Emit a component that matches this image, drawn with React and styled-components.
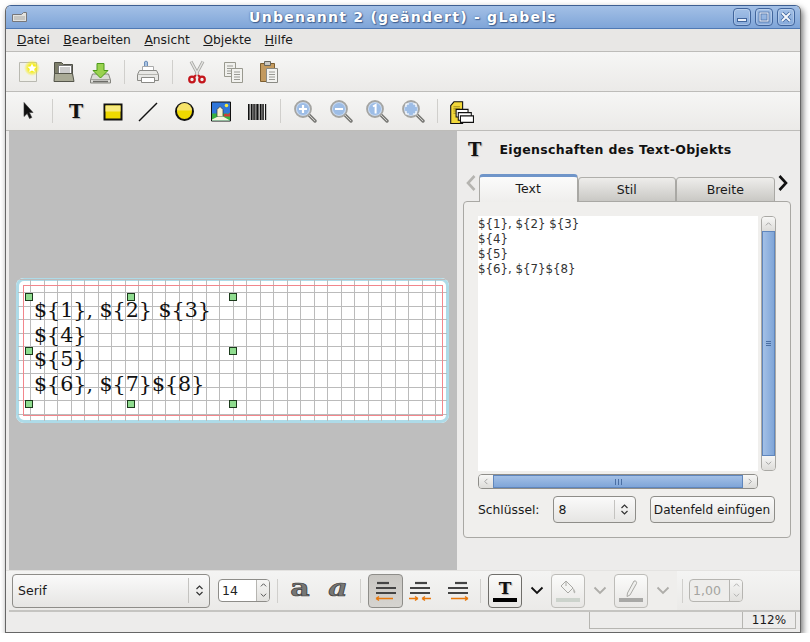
import React from "react";
import styled, { createGlobalStyle } from "styled-components";

const GlobalStyle = createGlobalStyle`
  html, body { margin: 0; padding: 0; background: #fff; }
  body { font-family: "DejaVu Sans", sans-serif; font-size: 12px; color: #1a1a1a; }
`;

const Window = styled.div`
  box-sizing: border-box;
  width: 796px;
  height: 628px;
  margin: 5px 0 0 5px;
  display: flex;
  flex-direction: column;
  background: #edeceb;
  border: 1px solid #666;
  border-top-color: #3d5f92;
  border-radius: 6px 6px 0 0;
  box-shadow: 2px 3px 6px rgba(0, 0, 0, 0.55);
  overflow: hidden;
`;

const TitleBar = styled.div`
  position: relative;
  height: 22px;
  flex: none;
  display: flex;
  align-items: center;
  justify-content: center;
  background: linear-gradient(#a3c0e6, #7fa5d8);
  border-bottom: 1px solid #4f79b4;
`;

const TitleText = styled.div`
  font-size: 14px;
  font-weight: bold;
  color: #fff;
  letter-spacing: 1.25px;
  margin-top: -1px;
  text-shadow: 0 0 2px #3f5f90, 1px 1px 1px #3f5f90;
`;

const WindowIcon = styled.div`
  position: absolute;
  left: 6px;
  top: 6px;
  display: flex;
`;

const WindowButtons = styled.div`
  position: absolute;
  right: 5px;
  top: 2px;
  display: flex;
  gap: 4px;
`;

const WindowButton = styled.div`
  box-sizing: border-box;
  width: 18px;
  height: 18px;
  border: 1px solid #41659c;
  border-radius: 4px;
  display: flex;
  align-items: center;
  justify-content: center;
  background: linear-gradient(#a3c0e6, #86aadb);
  box-shadow: inset 0 0 0 1px rgba(255, 255, 255, 0.25);
`;

const MenuBar = styled.div`
  height: 22px;
  flex: none;
  display: flex;
  align-items: center;
  padding-left: 11px;
  gap: 13.5px;
  background: #e8e7e5;
  border-bottom: 1px solid #bdbcb9;
  font-size: 12.3px;
`;

const Mnemonic = styled.span`
  text-decoration: underline;
`;

const Toolbar = styled.div`
  height: ${(p) => p.$height}px;
  flex: none;
  box-sizing: border-box;
  display: flex;
  align-items: center;
  padding-left: 4px;
  background: linear-gradient(#f6f6f5, #ebeae8);
  border-bottom: 1px solid #bdbcb9;
`;

const ToolButton = styled.div`
  width: 36px;
  height: 100%;
  flex: none;
  display: flex;
  align-items: center;
  justify-content: center;
`;

const Separator = styled.div`
  width: ${(p) => p.$width || 12}px;
  flex: none;
  display: flex;
  justify-content: center;
  &::before {
    content: "";
    width: 1px;
    height: 24px;
    background: #d0cfcc;
  }
`;

const ToolT = styled.span`
  font-family: "DejaVu Serif", serif;
  font-weight: bold;
  font-size: ${(p) => p.$size || 19}px;
  line-height: 1;
  color: #111;
  text-shadow: 1px 1px 1px rgba(0, 0, 0, 0.25);
`;

const Main = styled.div`
  flex: 1;
  min-height: 0;
  display: flex;
  padding-left: 3px;
`;

const CanvasArea = styled.div`
  width: 448px;
  flex: none;
  display: flex;
  align-items: center;
  justify-content: center;
  background: #bebebe;
`;

const LabelSheet = styled.div`
  position: relative;
  box-sizing: border-box;
  width: 433px;
  height: 145px;
  margin-right: 1px;
  background: #fff;
  border-radius: 8px;
  box-shadow: inset 0 0 0 3px #aedbe8;
  overflow: hidden;
`;

const LabelGrid = styled.svg`
  position: absolute;
  left: 0;
  top: 0;
`;

const LabelText = styled.div`
  position: absolute;
  left: 18px;
  top: 20px;
  font-family: "DejaVu Serif", serif;
  font-size: 20.6px;
  line-height: 24.7px;
  color: #111;
  white-space: pre;
`;

const Handle = styled.div`
  position: absolute;
  box-sizing: border-box;
  width: 8px;
  height: 8px;
  background: #8fdc8f;
  border: 1px solid #1c3a1c;
  left: ${(p) => p.$x}px;
  top: ${(p) => p.$y}px;
`;

const Panel = styled.div`
  flex: 1;
  display: flex;
  flex-direction: column;
  padding: 0 9px 0 6px;
  background: #edeceb;
`;

const PanelHeader = styled.div`
  box-sizing: border-box;
  height: 43px;
  flex: none;
  display: flex;
  align-items: center;
  padding: 0 0 6px 5px;
  gap: 18px;
`;

const PanelTitle = styled.div`
  font-weight: bold;
  font-size: 12.5px;
  letter-spacing: 0.33px;
  color: #111;
`;

const TabStrip = styled.div`
  height: 28px;
  flex: none;
  display: flex;
  align-items: flex-end;
  position: relative;
  margin-bottom: -1px;
`;

const TabArrow = styled.div`
  width: 16px;
  height: 28px;
  flex: none;
  display: flex;
  align-items: center;
  justify-content: center;
  margin-top: -5px;
  align-self: flex-start;
`;

const Tab = styled.div`
  box-sizing: border-box;
  width: 98.5px;
  height: ${(p) => (p.$active ? 28 : 25)}px;
  flex: none;
  display: flex;
  align-items: center;
  justify-content: center;
  font-size: 12.5px;
  border: 1px solid #a9a8a4;
  border-bottom: ${(p) => (p.$active ? "none" : "1px solid #a9a8a4")};
  border-top: ${(p) => (p.$active ? "3px solid #6f95c9" : "1px solid #b0afab")};
  border-radius: 4px 4px 0 0;
  background: ${(p) =>
    p.$active ? "linear-gradient(#fbfbfb, #efeeec)" : "linear-gradient(#eeedeb, #c9c8c4)"};
  position: relative;
  z-index: ${(p) => (p.$active ? 2 : 1)};
  padding-bottom: ${(p) => (p.$active ? 3 : 0)}px;
`;

const TabPane = styled.div`
  box-sizing: border-box;
  width: 328px;
  height: 337px;
  flex: none;
  padding: 14px 14px 0;
  background: #f0efed;
  border: 1px solid #a9a8a4;
  border-radius: 4px;
`;

const EditorRow = styled.div`
  display: flex;
  gap: 3px;
`;

const TextArea = styled.div`
  width: 280px;
  height: 255px;
  flex: none;
  box-sizing: border-box;
  padding: 1px 0 0 0;
  background: #fff;
  font-size: 11.8px;
  line-height: 15px;
  color: #333;
  white-space: pre;
`;

const VScroll = styled.div`
  box-sizing: border-box;
  width: 15px;
  height: 255px;
  flex: none;
  display: flex;
  flex-direction: column;
  border: 1px solid #a9a8a4;
  border-radius: 4px;
  overflow: hidden;
`;

const HScroll = styled.div`
  box-sizing: border-box;
  width: 280px;
  height: 15px;
  margin-top: 3px;
  display: flex;
  border: 1px solid #8e8d89;
  border-radius: 4px;
  overflow: hidden;
`;

const ScrollButton = styled.div`
  width: ${(p) => (p.$vertical ? "100%" : "14px")};
  height: ${(p) => (p.$vertical ? "14px" : "100%")};
  flex: none;
  display: flex;
  align-items: center;
  justify-content: center;
  background: linear-gradient(#f7f7f6, #dddcd9);
`;

const ScrollThumb = styled.div`
  flex: 1;
  display: flex;
  align-items: center;
  justify-content: center;
  background: ${(p) =>
    p.$vertical
      ? "linear-gradient(90deg, #a3c0e6, #7fa5d8)"
      : "linear-gradient(#a3c0e6, #7fa5d8)"};
  border: 1px solid #5f86bd;
`;

const GripMark = styled.div`
  width: ${(p) => (p.$vertical ? "5px" : "7px")};
  height: ${(p) => (p.$vertical ? "5px" : "6px")};
  background: repeating-linear-gradient(
    ${(p) => (p.$vertical ? "180deg" : "90deg")},
    #4b6fa3 0 1px,
    transparent 1px ${(p) => (p.$vertical ? "2px" : "3px")}
  );
`;

const KeyRow = styled.div`
  margin-top: 7px;
  display: flex;
  align-items: center;
`;

const KeyLabel = styled.div`
  width: 74.5px;
  flex: none;
  font-size: 12.3px;
`;

const Combo = styled.div`
  box-sizing: border-box;
  width: ${(p) => p.$width}px;
  height: ${(p) => p.$height}px;
  flex: none;
  display: flex;
  align-items: center;
  font-size: 12.5px;
  padding-left: 5px;
  border: 1px solid #8e8d89;
  border-radius: 4px;
  background: linear-gradient(#fafafa, #e6e5e3);
`;

const ComboValue = styled.div`
  flex: 1;
`;

const ComboSplit = styled.div`
  width: 20px;
  height: 76%;
  flex: none;
  display: flex;
  align-items: center;
  justify-content: center;
  border-left: 1px solid #c4c3c0;
`;

const PushButton = styled.div`
  box-sizing: border-box;
  width: 125px;
  height: 27px;
  margin-left: 14px;
  flex: none;
  display: flex;
  align-items: center;
  justify-content: center;
  font-size: 12.1px;
  border: 1px solid #8e8d89;
  border-radius: 4px;
  background: linear-gradient(#fafafa, #e6e5e3);
`;

const FontBar = styled.div`
  height: 39px;
  flex: none;
  display: flex;
  align-items: center;
  padding-left: 6px;
  background: linear-gradient(#f4f4f3, #ebeae8);
  border-top: 1px solid #e4e3e1;
`;

const Spin = styled.div`
  box-sizing: border-box;
  width: ${(p) => p.$width}px;
  height: 23px;
  flex: none;
  display: flex;
  border: 1px solid ${(p) => (p.$disabled ? "#b6b5b1" : "#8e8d89")};
  border-radius: 4px;
  background: ${(p) => (p.$disabled ? "#eeedeb" : "#fff")};
  overflow: hidden;
  margin-left: ${(p) => p.$gap || 0}px;
`;

const SpinValue = styled.div`
  flex: 1;
  display: flex;
  align-items: center;
  padding-left: 3px;
  font-size: 12.5px;
  color: ${(p) => (p.$disabled ? "#a5a4a0" : "#222")};
`;

const SpinButtons = styled.div`
  width: 12px;
  flex: none;
  display: flex;
  flex-direction: column;
  border-left: 1px solid #b6b5b1;
  background: linear-gradient(#f6f6f5, #e2e1de);
`;

const SpinStep = styled.div`
  flex: 1;
  display: flex;
  align-items: center;
  justify-content: center;
`;

const StyleGlyph = styled.span`
  width: 32px;
  flex: none;
  text-align: center;
  font-family: "DejaVu Serif", serif;
  font-weight: bold;
  font-style: ${(p) => (p.$italic ? "italic" : "normal")};
  font-size: 25px;
  line-height: 1;
  color: #777775;
  -webkit-text-stroke: 0.7px #3a3a3a;
  transform: scaleX(1.2);
  margin-top: -7px;
  margin-left: ${(p) => p.$gap || 0}px;
`;

const BarButton = styled.div`
  box-sizing: border-box;
  width: ${(p) => p.$width || 34}px;
  height: 34px;
  flex: none;
  display: flex;
  align-items: center;
  justify-content: center;
  border-radius: 4px;
  border: 1px solid ${(p) => (p.$framed ? "#8e8d89" : "transparent")};
  background: ${(p) =>
    p.$pressed
      ? "linear-gradient(#c8c6c2, #d6d4d0)"
      : p.$framed
      ? "linear-gradient(#fbfbfa, #e8e7e5)"
      : "transparent"};
  margin-left: ${(p) => p.$gap || 0}px;
`;

const ArrowSlot = styled.div`
  width: 29px;
  flex: none;
  display: flex;
  justify-content: center;
`;

const DisabledGroup = styled.div`
  display: flex;
  align-items: center;
  height: 100%;
  background: #efeeec;
`;

const ColorButton = styled(BarButton)`
  flex-direction: column;
  gap: 1px;
  border-color: ${(p) => (p.$disabled ? "#bdbcb8" : "#6f6e6a")};
`;

const ColorBar = styled.div`
  width: 24px;
  height: 4px;
  background: ${(p) => p.$color};
`;

const StatusBar = styled.div`
  height: 22px;
  flex: none;
  box-sizing: border-box;
  display: flex;
  justify-content: flex-end;
  padding-right: 4px;
  border-top: 2px solid #c5c4c1;
  margin-left: 3px;
  background: #edeceb;
`;

const StatusCell = styled.div`
  box-sizing: border-box;
  width: ${(p) => p.$width}px;
  height: 17px;
  display: flex;
  align-items: center;
  justify-content: center;
  font-size: 12px;
  border: 1px solid #b6b5b1;
  border-top: none;
  border-left-width: ${(p) => (p.$first ? 1 : 0)}px;
`;

const Ico = ({ children, size = 24 }) => (
  <svg width={size} height={size} viewBox="0 0 24 24">
    {children}
  </svg>
);

const NewIcon = () => (
  <Ico>
    <defs>
      <radialGradient id="newGlow">
        <stop offset="0.45" stopColor="#f6ee1e" />
        <stop offset="1" stopColor="#f6ee1e" stopOpacity="0" />
      </radialGradient>
    </defs>
    <path d="M3.5 2.5h17v19h-17z" fill="#f1f1ea" stroke="#b9b9b1" />
    <circle cx="16" cy="8" r="8" fill="url(#newGlow)" />
    <path d="M16 3.5l1.4 2.9 3.1.4-2.3 2.1.6 3.1-2.8-1.5-2.8 1.5.6-3.1-2.3-2.1 3.1-.4z" fill="#fff" />
  </Ico>
);

const OpenIcon = () => (
  <Ico>
    <path d="M2.5 2.5h7l2 2h9v17h-18z" fill="#7d7e6a" stroke="#4f5046" />
    <path d="M6.5 5.5h13v9h-13z" fill="#fff" stroke="#777" />
    <path d="M8 8h10M8 10h10M8 12h10" stroke="#999" />
    <path d="M2.5 13.5h18l1.5 8H2z" fill="#a9aa96" stroke="#55564b" />
  </Ico>
);

const SaveIcon = () => (
  <Ico>
    <path d="M4.5 14L2.5 20v3h20v-3L20.5 14z" fill="#dcdcd8" stroke="#85857f" />
    <path d="M2.5 19.5h20" stroke="#a5a5a0" />
    <path d="M5 21.5h15" stroke="#6d6d68" strokeWidth="1.5" />
    <path d="M9 3.5h7v7h4L12.5 18 5 10.5h4z" fill="#9ad24f" stroke="#4c9a1a" />
  </Ico>
);

const PrintIcon = () => (
  <Ico>
    <path d="M8.5 10V2c0-1 3-1 3 0v8" fill="#a9c3e2" stroke="#6d8db8" />
    <path d="M6.5 6.5h11v5h-11z" fill="#fff" stroke="#aaa" />
    <path d="M3.5 10.5h17l2 4v6h-21v-6z" fill="#e8e8e5" stroke="#8a8a86" />
    <path d="M5.5 17.5h13v5h-13z" fill="#fff" stroke="#8a8a86" />
    <path d="M2 14.5h20" stroke="#b5b5b0" />
  </Ico>
);

const CutIcon = () => (
  <Ico>
    <path d="M6 1.5l7 13M18 1.5l-7 13" stroke="#a5a5a2" strokeWidth="3" />
    <path d="M6 1.5l7 13M18 1.5l-7 13" stroke="#e4e4e1" strokeWidth="1.5" />
    <path d="M11 15l-2.5 2.5M13 15l2.5 2.5" stroke="#c4161c" strokeWidth="2" />
    <circle cx="7" cy="19.5" r="2.8" fill="none" stroke="#c4161c" strokeWidth="2.2" />
    <circle cx="17" cy="19.5" r="2.8" fill="none" stroke="#c4161c" strokeWidth="2.2" />
  </Ico>
);

const CopyIcon = () => (
  <Ico>
    <path d="M3.5 2.5h11v14h-11z" fill="#f0f0ed" stroke="#99998f" />
    <path d="M6 6h6M6 8.5h6M6 11h6M6 13.5h6" stroke="#9a9a94" />
    <path d="M10.5 8.5h11v14h-11z" fill="#f2f2ef" stroke="#99998f" />
    <path d="M13 12h6M13 14.5h6M13 17h6M13 19.5h6" stroke="#9a9a94" />
  </Ico>
);

const PasteIcon = () => (
  <Ico>
    <path d="M3.5 3.5h14v18h-14z" fill="#c39a5f" stroke="#7d5f30" />
    <path d="M7.5 1.5h6v4h-6z" fill="#c9c9c5" stroke="#66665f" />
    <path d="M9.5 8.5h11v14h-11z" fill="#f3f3f0" stroke="#8a8a84" />
    <path d="M12 12h6M12 14.5h6M12 17h6M12 19.5h6" stroke="#9a9a94" />
  </Ico>
);

const PointerIcon = () => (
  <Ico>
    <path d="M8 3.5v14l3.2-3 2.3 5 2.3-1-2.4-5H17z" fill="#111" stroke="#333" strokeWidth="0.6" />
  </Ico>
);

const RectIcon = () => (
  <Ico>
    <path d="M4.5 5.5h17v15h-17z" fill="#efd900" stroke="#111" strokeWidth="2" />
    <path d="M5.5 6.5h15v6h-15z" fill="#f7ea7e" />
  </Ico>
);

const LineIcon = () => (
  <Ico>
    <path d="M3 22L21 4" stroke="#111" strokeWidth="1.4" />
  </Ico>
);

const CircleIcon = () => (
  <Ico>
    <circle cx="12.5" cy="12.5" r="8.5" fill="#efd900" stroke="#111" strokeWidth="2" />
    <path d="M5 11.5a7.5 7.5 0 0 1 15 0z" fill="#f6e36a" />
  </Ico>
);

const ImageIcon = () => (
  <Ico>
    <g transform="translate(2 1.5)">
      <path d="M1.5 1.5h19v19h-19z" fill="#2f76d9" stroke="#111" />
      <path d="M2 13h18v7H2z" fill="#38b03f" />
      <path d="M7 16V9l3-3 3 3v7H7z" fill="#f7f3cc" stroke="#333" strokeWidth="0.7" />
      <path d="M2 19l6-3h5l7 4H2z" fill="#f4f4dc" />
      <circle cx="16.5" cy="5" r="1.8" fill="#f6e93a" />
      <path d="M14 14l2-1 2 1 2-2v4h-6z" fill="#d23a3a" />
    </g>
  </Ico>
);

const BarcodeIcon = () => (
  <Ico>
    {[4, 5.5, 7, 8.5, 10, 11.5, 13, 14.5, 16, 17.5, 19, 21].map((x, i) => (
      <rect key={x} x={x} y="5" width={i % 3 === 1 ? 0.8 : 1.2} height="16" fill="#111" />
    ))}
  </Ico>
);

const ZoomIcon = ({ mark }) => (
  <Ico>
    <path d="M15 15l7 7" stroke="#7b7b78" strokeWidth="3.4" strokeLinecap="round" />
    <path d="M15 15l7 7" stroke="#cfcfcb" strokeWidth="1" />
    <circle cx="10" cy="10" r="8" fill="#c6d8f0" stroke="#a5a5a2" strokeWidth="1.8" />
    <circle cx="10" cy="10" r="6" fill="#9dbde6" />
    {mark === "plus" && <path d="M6 10h8M10 6v8" stroke="#fff" strokeWidth="2.2" />}
    {mark === "minus" && <path d="M6 10h8" stroke="#fff" strokeWidth="2.2" />}
    {mark === "one" && <path d="M8 7.5l2.6-1.5v8.5" stroke="#fff" strokeWidth="2" fill="none" />}
    {mark === "fit" && (
      <path d="M5 8V5h3M12 5h3v3M15 12v3h-3M8 15H5v-3" stroke="#fff" strokeWidth="1.2" fill="none" />
    )}
  </Ico>
);

const MergeIcon = () => (
  <Ico size={26}>
    <g transform="translate(0 2)">
      <path d="M2.5 5l3-3.5h8v20h-11z" fill="#f2d83a" stroke="#111" />
      <path d="M5 6h6M5 8h6M5 10h6M5 12h6" stroke="#a58f1a" />
      <path d="M7.5 8.5h11v7h-11z" fill="#fff" stroke="#111" />
      <path d="M9.5 11.5h12v7h-12z" fill="#fff" stroke="#111" />
      <path d="M11.5 14.5h12v6h-12z" fill="#fff" stroke="#111" />
    </g>
  </Ico>
);

const Chevron = ({ dir, color }) => {
  const d = {
    up: "M1 5l3-3 3 3",
    down: "M1 2l3 3 3-3",
    left: "M5 1L2 4l3 3",
    right: "M2 1l3 3-3 3",
  }[dir];
  return (
    <svg width="7" height="7" viewBox="0 0 8 8">
      <path d={d} fill="none" stroke={color} strokeWidth="1" />
    </svg>
  );
};

const BigChevron = ({ dir, color }) => (
  <svg width="12" height="20" viewBox="0 0 12 20">
    <path
      d={dir === "left" ? "M9.5 3L3 10l6.5 7" : "M2.5 3L9 10l-6.5 7"}
      fill="none"
      stroke={color}
      strokeWidth="2.6"
    />
  </svg>
);

const DropArrow = ({ color }) => (
  <svg width="14" height="9" viewBox="0 0 14 9">
    <path d="M1.5 1.5L7 7l5.5-5.5" fill="none" stroke={color} strokeWidth="1.8" />
  </svg>
);

const UpDown = () => (
  <svg width="9" height="13" viewBox="0 0 9 13">
    <path d="M1.5 5l3-3 3 3M1.5 8l3 3 3-3" fill="none" stroke="#333" strokeWidth="1.2" />
  </svg>
);

const AlignIcon = ({ align }) => {
  const top = { left: "M3 4h12", center: "M7 4h12", right: "M9 4h12" }[align];
  return (
    <svg width="24" height="24" viewBox="0 0 24 24">
      <path d={top} stroke="#444" strokeWidth="2.2" />
      <path d="M2 9h20M2 14h20" stroke="#444" strokeWidth="2.2" />
      {align === "left" && <path d="M2 19.5h17M2 19.5l3-2M2 19.5l3 2" stroke="#e8780c" strokeWidth="1.4" fill="none" />}
      {align === "center" && (
        <path d="M1 19.5h9M10 19.5l-3-2M10 19.5l-3 2M23 19.5h-9M14 19.5l3-2M14 19.5l3 2" stroke="#e8780c" strokeWidth="1.4" fill="none" />
      )}
      {align === "right" && <path d="M5 19.5h17M22 19.5l-3-2M22 19.5l-3 2" stroke="#e8780c" strokeWidth="1.4" fill="none" />}
    </svg>
  );
};

const BucketIcon = () => (
  <svg width="22" height="17" viewBox="0 0 22 17">
    <path d="M9 1l7 7-5 5-7-7z" fill="#f3f3f1" stroke="#a9a9a5" />
    <path d="M9 1V6" stroke="#a9a9a5" />
    <path d="M16 8c2 2 3 4 2 5s-2-1-2-5z" fill="#b7b7b3" />
  </svg>
);

const PencilIcon = () => (
  <svg width="22" height="17" viewBox="0 0 22 17">
    <path d="M14 1c2-.5 3 1 2.5 2.5L10 15l-3 1.5.5-3.5z" fill="#efefed" stroke="#a9a9a5" />
  </svg>
);

const gridX = Array.from({ length: 31 }, (_, i) => Math.floor(1.2 + i * 13.5 + 13.5) + 0.5);
const gridY = Array.from({ length: 11 }, (_, i) => Math.floor(1.2 + i * 13.5) + 0.5);
const handles = [
  [9, 15], [111, 15], [213, 15],
  [9, 69], [213, 69],
  [9, 122], [111, 122], [213, 122],
];

const menus = [
  ["D", "atei"],
  ["B", "earbeiten"],
  ["A", "nsicht"],
  ["O", "bjekte"],
  ["H", "ilfe"],
];

const fieldText = "${1}, ${2} ${3}\n${4}\n${5}\n${6}, ${7}${8}";

const App = () => {
  return (
    <>
      <GlobalStyle />
      <Window>
        <TitleBar>
          <WindowIcon>
            <svg width="16" height="10" viewBox="0 0 16 10">
              <path d="M.5 2.5h9l2-2h3v9h-14z" fill="#e3e3df" stroke="#77777a" />
              <path d="M2 5h11M2 7h11" stroke="#a9a9a6" />
            </svg>
          </WindowIcon>
          <TitleText>Unbenannt 2 (geändert) - gLabels</TitleText>
          <WindowButtons>
            <WindowButton>
              <svg width="12" height="12" viewBox="0 0 12 12">
                <rect x="1.5" y="7.5" width="9" height="3" fill="#e9eff8" stroke="#41659c" />
              </svg>
            </WindowButton>
            <WindowButton>
              <svg width="12" height="12" viewBox="0 0 12 12">
                <rect x="2" y="2" width="8" height="8" fill="none" stroke="#41659c" strokeWidth="2.6" />
                <rect x="2" y="2" width="8" height="8" fill="none" stroke="#e9eff8" strokeWidth="1.2" />
              </svg>
            </WindowButton>
            <WindowButton>
              <svg width="12" height="12" viewBox="0 0 12 12">
                <path d="M2 2l8 8M10 2l-8 8" stroke="#41659c" strokeWidth="3.6" />
                <path d="M2 2l8 8M10 2l-8 8" stroke="#f4f7fb" strokeWidth="2" />
              </svg>
            </WindowButton>
          </WindowButtons>
        </TitleBar>

        <MenuBar>
          {menus.map(([m, rest]) => (
            <div key={m}>
              <Mnemonic>{m}</Mnemonic>
              {rest}
            </div>
          ))}
        </MenuBar>

        <Toolbar $height={40}>
          <ToolButton><NewIcon /></ToolButton>
          <ToolButton><OpenIcon /></ToolButton>
          <ToolButton><SaveIcon /></ToolButton>
          <Separator />
          <ToolButton><PrintIcon /></ToolButton>
          <Separator $width={13} />
          <ToolButton><CutIcon /></ToolButton>
          <ToolButton><CopyIcon /></ToolButton>
          <ToolButton><PasteIcon /></ToolButton>
        </Toolbar>

        <Toolbar $height={39}>
          <ToolButton><PointerIcon /></ToolButton>
          <Separator />
          <ToolButton><ToolT>T</ToolT></ToolButton>
          <ToolButton><RectIcon /></ToolButton>
          <ToolButton><LineIcon /></ToolButton>
          <ToolButton><CircleIcon /></ToolButton>
          <ToolButton><ImageIcon /></ToolButton>
          <ToolButton><BarcodeIcon /></ToolButton>
          <Separator $width={13} />
          <ToolButton><ZoomIcon mark="plus" /></ToolButton>
          <ToolButton><ZoomIcon mark="minus" /></ToolButton>
          <ToolButton><ZoomIcon mark="one" /></ToolButton>
          <ToolButton><ZoomIcon mark="fit" /></ToolButton>
          <Separator />
          <ToolButton><MergeIcon /></ToolButton>
        </Toolbar>

        <Main>
          <CanvasArea>
            <LabelSheet>
              <LabelGrid width="433" height="145">
                {gridX.map((x) => (
                  <line key={x} x1={x} x2={x} y1="2" y2="143" stroke="#bbb" />
                ))}
                {gridY.map((y) => (
                  <line key={y} x1="2" x2="431" y1={y} y2={y} stroke="#bbb" />
                ))}
                <rect x="7.5" y="7.5" width="419" height="130" fill="none" stroke="#f2868c" />
              </LabelGrid>
              <LabelText>{fieldText}</LabelText>
              {handles.map(([x, y]) => (
                <Handle key={`${x}-${y}`} $x={x} $y={y} />
              ))}
            </LabelSheet>
          </CanvasArea>

          <Panel>
            <PanelHeader>
              <ToolT $size={18}>T</ToolT>
              <PanelTitle>Eigenschaften des Text-Objekts</PanelTitle>
            </PanelHeader>
            <TabStrip>
              <TabArrow><BigChevron dir="left" color="#b5b4b0" /></TabArrow>
              <Tab $active>Text</Tab>
              <Tab>Stil</Tab>
              <Tab>Breite</Tab>
              <TabArrow><BigChevron dir="right" color="#111" /></TabArrow>
            </TabStrip>
            <TabPane>
              <EditorRow>
                <TextArea>{fieldText}</TextArea>
                <VScroll>
                  <ScrollButton $vertical><Chevron dir="up" color="#999" /></ScrollButton>
                  <ScrollThumb $vertical><GripMark $vertical /></ScrollThumb>
                  <ScrollButton $vertical><Chevron dir="down" color="#999" /></ScrollButton>
                </VScroll>
              </EditorRow>
              <HScroll>
                <ScrollButton><Chevron dir="left" color="#999" /></ScrollButton>
                <ScrollThumb><GripMark /></ScrollThumb>
                <ScrollButton><Chevron dir="right" color="#999" /></ScrollButton>
              </HScroll>
              <KeyRow>
                <KeyLabel>Schlüssel:</KeyLabel>
                <Combo $width={83} $height={27}>
                  <ComboValue>8</ComboValue>
                  <ComboSplit><UpDown /></ComboSplit>
                </Combo>
                <PushButton>Datenfeld einfügen</PushButton>
              </KeyRow>
            </TabPane>
          </Panel>
        </Main>

        <FontBar>
          <Combo $width={198} $height={34}>
            <ComboValue>Serif</ComboValue>
            <ComboSplit><UpDown /></ComboSplit>
          </Combo>
          <Spin $width={52} $gap={8}>
            <SpinValue>14</SpinValue>
            <SpinButtons>
              <SpinStep><Chevron dir="up" color="#444" /></SpinStep>
              <SpinStep><Chevron dir="down" color="#444" /></SpinStep>
            </SpinButtons>
          </Spin>
          <Separator $width={14} />
          <StyleGlyph>a</StyleGlyph>
          <StyleGlyph $italic $gap={6}>a</StyleGlyph>
          <Separator />
          <BarButton $framed $pressed $width={35} $gap={2}><AlignIcon align="left" /></BarButton>
          <BarButton><AlignIcon align="center" /></BarButton>
          <BarButton $width={38} $gap={2}><AlignIcon align="right" /></BarButton>
          <Separator $width={7} />
          <ColorButton $framed $gap={4}>
            <ToolT $size={17}>T</ToolT>
            <ColorBar $color="#000" />
          </ColorButton>
          <ArrowSlot><DropArrow color="#111" /></ArrowSlot>
          <DisabledGroup>
            <ColorButton $framed $disabled>
              <BucketIcon />
              <ColorBar $color="#ccd3cc" />
            </ColorButton>
            <ArrowSlot><DropArrow color="#aeada9" /></ArrowSlot>
            <ColorButton $framed $disabled>
              <PencilIcon />
              <ColorBar $color="#a8a8a6" />
            </ColorButton>
            <ArrowSlot><DropArrow color="#aeada9" /></ArrowSlot>
          </DisabledGroup>
          <Separator $width={10} />
          <Spin $width={54} $gap={2} $disabled>
            <SpinValue $disabled>1,00</SpinValue>
            <SpinButtons>
              <SpinStep><Chevron dir="up" color="#aaa" /></SpinStep>
              <SpinStep><Chevron dir="down" color="#aaa" /></SpinStep>
            </SpinButtons>
          </Spin>
        </FontBar>

        <StatusBar>
          <StatusCell $width={154} $first />
          <StatusCell $width={53}>112%</StatusCell>
        </StatusBar>
      </Window>
    </>
  );
};

export default App;
